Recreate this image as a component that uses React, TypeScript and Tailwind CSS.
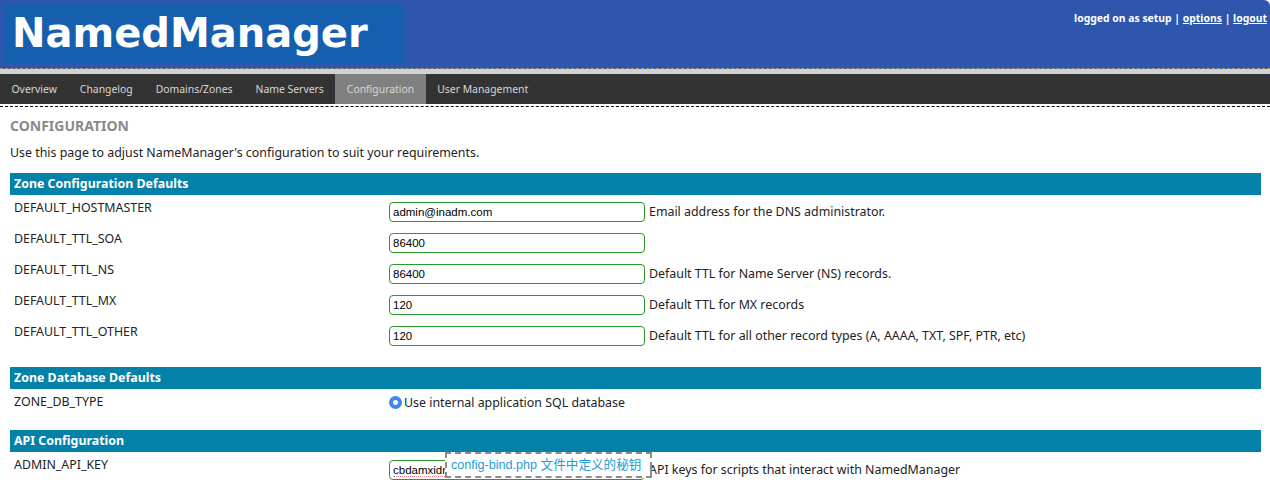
const navItems = ['Overview', 'Changelog', 'Domains/Zones', 'Name Servers', 'Configuration', 'User Management'];

type Row = { name: string; value: string; help?: string };

const zoneRows: Row[] = [
    { name: 'DEFAULT_HOSTMASTER', value: 'admin@inadm.com', help: 'Email address for the DNS administrator.' },
    { name: 'DEFAULT_TTL_SOA', value: '86400' },
    { name: 'DEFAULT_TTL_NS', value: '86400', help: 'Default TTL for Name Server (NS) records.' },
    { name: 'DEFAULT_TTL_MX', value: '120', help: 'Default TTL for MX records' },
    { name: 'DEFAULT_TTL_OTHER', value: '120', help: 'Default TTL for all other record types (A, AAAA, TXT, SPF, PTR, etc)' },
];

function SectionHeader({ title }: { title: string }) {
    return (
        <div className="h-[22px] bg-[#0381a8] pl-[4px] text-[12.4px] leading-[22px] font-bold text-white">
            {title}
        </div>
    );
}

function TextField({ value }: { value: string }) {
    return (
        <div className="h-[20px] w-[256px] rounded-[4px] border border-[#2a9a2a] pl-[3px] font-['Liberation_Sans',sans-serif] text-[11.5px] leading-[18px] text-black">
            {value}
        </div>
    );
}

export default function App() {
    return (
        <div className="min-h-[495px] bg-white font-['Noto_Sans',sans-serif] text-[#222]">
            {/* header */}
            <div className="flex h-[69px] justify-between rounded-tr-[6px] border-b border-dashed border-[#a8926a] bg-[#2d56ac]">
                <div className="mt-[3px] ml-[3px] h-[60px] w-[400px] bg-[#165eae] pl-[9px] font-['DejaVu_Sans',sans-serif] text-[40px] leading-[60px] font-bold text-white">
                    NamedManager
                </div>
                <div className="mt-[10px] mr-[3px] text-[10.4px] leading-[16px] font-bold text-white">
                    logged on as setup | <span className="underline">options</span> |{' '}
                    <span className="underline">logout</span>
                </div>
            </div>
            <div className="h-[5px] bg-[#d2d2d2]" />
            <div className="flex h-[30px] bg-[#333333] text-[10.4px] leading-[30px] text-[#d8d8d8]">
                {navItems.map((item) => (
                    <div
                        key={item}
                        className={`px-[11.5px] ${item === 'Configuration' ? 'bg-[#808080]' : ''}`}
                    >
                        {item}
                    </div>
                ))}
            </div>
            <div className="mt-[2px] border-t border-dashed border-black" />

            {/* content */}
            <div className="pr-[9px] pl-[10px] text-[12.4px]">
                <h1 className="mt-[10px] text-[14px] leading-[17px] font-bold text-[#8a8a8a]">CONFIGURATION</h1>
                <p className="mt-[11px] leading-[15px]">
                    Use this page to adjust NameManager's configuration to suit your requirements.
                </p>

                <div className="mt-[13px]">
                    <SectionHeader title="Zone Configuration Defaults" />
                    {zoneRows.map((row) => (
                        <div key={row.name} className="flex h-[31px] items-start">
                            <div className="w-[379px] pt-[5px] pl-[4px] leading-[15px]">{row.name}</div>
                            <div className="mt-[7px]">
                                <TextField value={row.value} />
                            </div>
                            {row.help && <div className="mt-[7px] pl-[4px] leading-[20px]">{row.help}</div>}
                        </div>
                    ))}
                </div>

                <div className="mt-[17px]">
                    <SectionHeader title="Zone Database Defaults" />
                    <div className="flex h-[41px] items-start">
                        <div className="w-[379px] pt-[5px] pl-[4px] leading-[15px]">ZONE_DB_TYPE</div>
                        <div className="mt-[6px] flex items-center gap-[2px] leading-[15px]">
                            <span className="flex h-[13px] w-[13px] items-center justify-center rounded-full bg-[#3f85f4]">
                                <span className="h-[5px] w-[5px] rounded-full bg-white" />
                            </span>
                            Use internal application SQL database
                        </div>
                    </div>
                </div>

                <div>
                    <SectionHeader title="API Configuration" />
                    <div className="flex h-[40px] items-start">
                        <div className="w-[379px] pt-[5px] pl-[4px] leading-[15px]">ADMIN_API_KEY</div>
                        <div className="relative mt-[8px] h-[20px]">
                            <div className="h-[20px] w-[256px] rounded-[4px] border border-[#2a9a2a] pl-[3px] font-['Liberation_Sans',sans-serif] text-[11.5px] leading-[18px] text-black">
                                <span className="border-b border-dotted border-[#f08080]">cbdamxidn</span>
                            </div>
                            {/* annotation overlay */}
                            <div className="absolute top-[-8px] left-[56px] h-[26px] w-[207px] border-2 border-dashed border-[#8c8c8c] bg-white pl-[4px] font-['Liberation_Sans','Noto_Sans_CJK_SC',sans-serif] text-[12.6px] leading-[22px] text-[#1e9bd7]">
                                config-bind.php 文件中定义的秘钥
                            </div>
                            <div className="absolute top-[2px] left-[261px] h-[16px] w-[2px] bg-[#8c8c8c]" />
                        </div>
                        <div className="mt-[8px] pl-[4px] leading-[20px]">API keys for scripts that interact with NamedManager</div>
                    </div>
                </div>
            </div>
        </div>
    );
}
